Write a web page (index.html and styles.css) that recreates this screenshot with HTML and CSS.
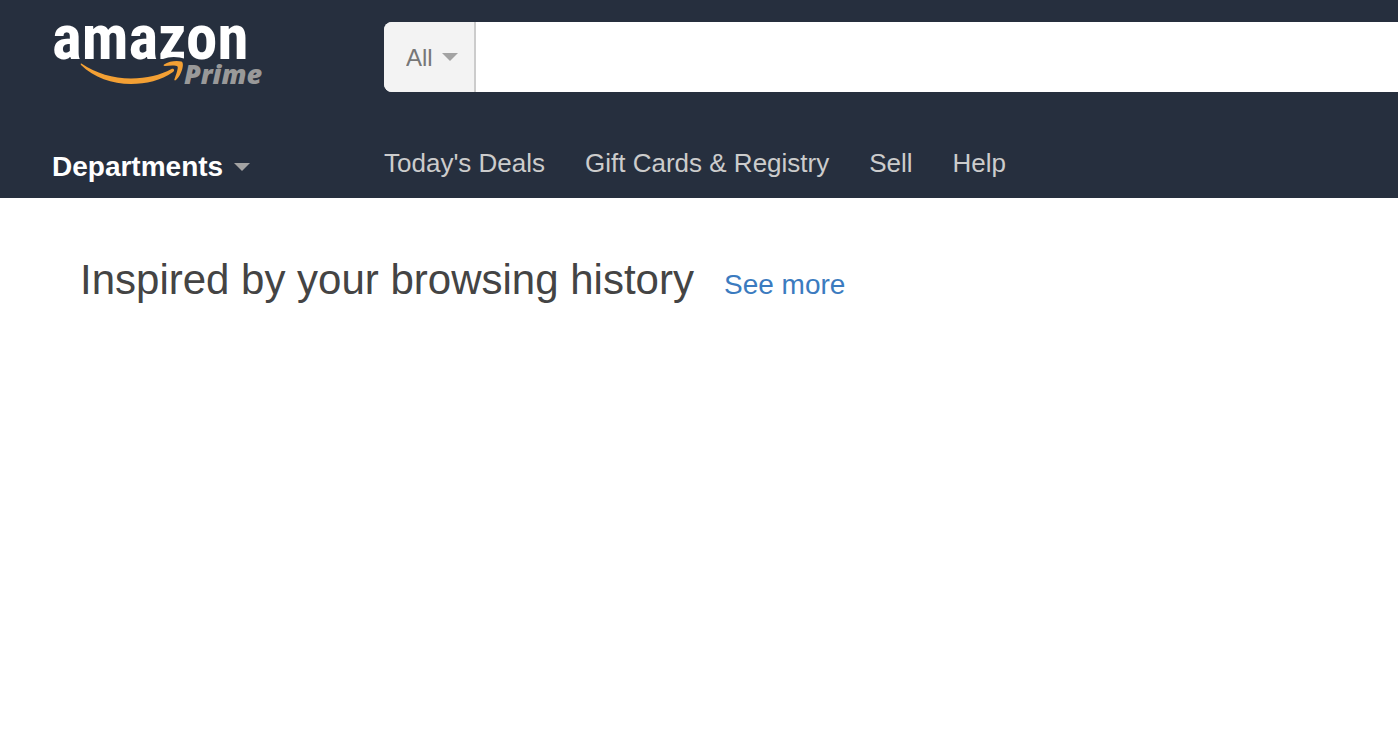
FILE: index.html
```html
<!DOCTYPE html>
<html lang="en">
<head>
  <meta charset="UTF-8">
  <meta name="viewport" content="width=device-width, initial-scale=1">
  <title>Amazon</title>
  <link rel="stylesheet" href="styles.css">
</head>
<body>
<header class="header">
  <a class="logo" href="#" aria-label="Amazon Prime">
    <svg width="216" height="70" viewBox="0 0 216 70">
      <text class="logo-name" x="0" y="37">amazon</text>
      <path fill="#f3a034" d="M29.400 41.600C44 51.500 61 56.500 79 56.500C95 56.500 108 53 119.500 47C122 46 123 48.500 121 50C109 58.500 94 62 79 62C60 62 42 55.500 29 43C28.500 42 28.700 41.200 29.400 41.600Z"/>
      <path fill="#262f3e" d="M111 37Q121 33 134 37V40H111Z"/>
      <path fill="#f3a034" d="M112 42.500C117 39 125 38.200 129.500 39.500C133 41 129.500 53.500 124 58C122.700 59 122 58 122.500 57C124 53 126.500 46 125.500 44.500C124.500 43 118 43.300 113 43.900C111.500 44 111.300 43.200 112 42.500Z"/>
      <text class="logo-prime" x="132" y="62">Prime</text>
    </svg>
  </a>
  <form class="search" action="#">
    <div class="search-category">
      <select class="category-select" aria-label="Search category">
        <option>All</option>
      </select>
      <svg class="arrow" width="16" height="8" viewBox="0 0 16 8"><path d="M0 0h16l-8 8z"/></svg>
    </div>
    <input class="search-input" type="text" aria-label="Search">
  </form>
  <button class="departments" type="button">
    Departments
    <svg class="arrow" width="16" height="8" viewBox="0 0 16 8"><path d="M0 0h16l-8 8z"/></svg>
  </button>
  <nav class="nav">
    <a href="#">Today's Deals</a>
    <a href="#">Gift Cards &amp; Registry</a>
    <a href="#">Sell</a>
    <a href="#">Help</a>
  </nav>
</header>
<main class="content">
  <h1 class="title">Inspired by your browsing history</h1>
  <a class="see-more" href="#">See more</a>
</main>
</body>
</html>
```

FILE: styles.css
```css
* { box-sizing: border-box; }
body { margin: 0; background: #fff; color: #444; font-family: "Liberation Sans", Arial, sans-serif; }
a { text-decoration: none; }

.header { display: grid; grid-template-columns: 332px 1fr; row-gap: 56px; padding: 22px 0 16px 52px; background: #262f3e; }
.logo { height: 70px; }
.logo svg { display: block; overflow: visible; }
.logo-name { font-family: "Roboto Condensed", Roboto, sans-serif; font-size: 63px; font-weight: bold; fill: #fff; }
.logo-prime { font-family: "Open Sans", sans-serif; font-size: 27px; font-weight: 800; font-style: italic; fill: #999; }

.search { display: flex; height: 70px; background: #fff; border-radius: 8px 0 0 8px; overflow: hidden; }
.search-category { display: grid; align-items: center; width: 92px; background: #f3f3f3; border-right: 2px solid #ccc; }
.search-category > * { grid-area: 1 / 1; }
.category-select { width: 100%; height: 100%; padding: 0 0 0 22px; appearance: none; background: none; border: none; color: #777; font-family: inherit; font-size: 24px; }
.search-category .arrow { justify-self: end; margin-right: 16px; pointer-events: none; }
.arrow { fill: #a3a3a3; }
.search-input { flex: 1; min-width: 0; padding: 0 20px; border: none; font-family: inherit; font-size: 24px; }

.departments { display: flex; align-items: center; justify-self: start; gap: 11px; height: 34px; padding: 4px 0 0; background: none; border: none; color: #fff; font-family: inherit; font-size: 28px; font-weight: bold; cursor: pointer; }
.nav { display: flex; gap: 40px; line-height: 30px; font-size: 26px; }
.nav a { color: #ccc; }

.content { display: flex; align-items: baseline; gap: 30px; padding: 57px 80px; }
.title { margin: 0; font-size: 42px; font-weight: normal; line-height: 50px; }
.see-more { color: #3b7bbf; font-size: 28px; }
```
